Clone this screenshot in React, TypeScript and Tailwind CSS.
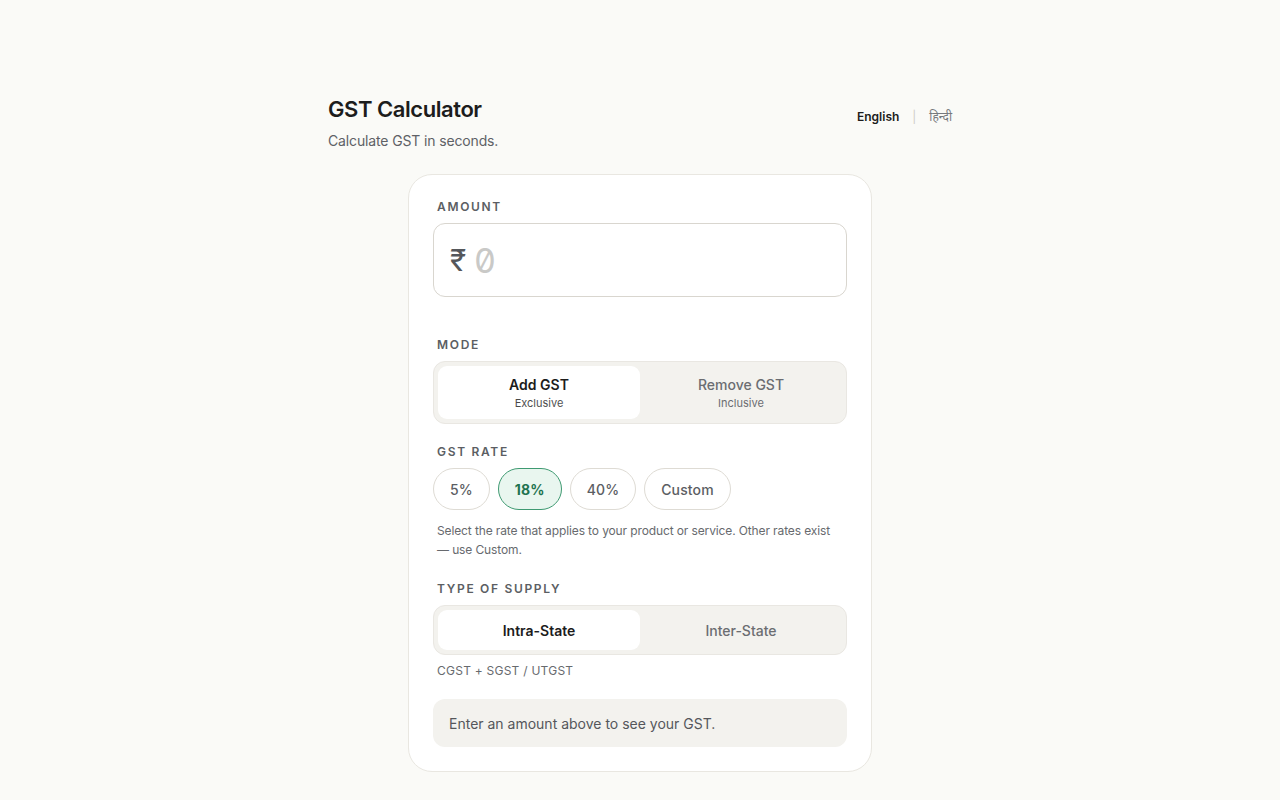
import { useState } from "react";

const font = { fontFamily: "Inter, 'Noto Sans', sans-serif" };

function Label({ children }: { children: React.ReactNode }) {
  return (
    <div className="px-1 text-[12px] font-semibold uppercase tracking-[0.14em] text-[#5b5e63] leading-4">
      {children}
    </div>
  );
}

export default function App() {
  const [mode, setMode] = useState<"add" | "remove">("add");
  const [rate, setRate] = useState("18%");
  const [supply, setSupply] = useState<"intra" | "inter">("intra");
  const rates = ["5%", "18%", "40%", "Custom"];

  return (
    <div className="min-h-screen bg-[#fafaf7] text-[#1c1c1c]" style={font}>
      <div className="mx-auto w-[624px] pt-[95px]">
        {/* Header */}
        <div className="flex items-start justify-between">
          <div>
            <h1 className="text-[22px] font-semibold tracking-[-0.02em] leading-7">GST Calculator</h1>
            <p className="mt-[8px] text-[14px] tracking-[-0.01em] text-[#5e6166] leading-5">Calculate GST in seconds.</p>
          </div>
          <div className="mt-[13px] flex items-center gap-[13px] text-[12px]">
            <span className="font-semibold text-[#1c1c1c]">English</span>
            <span className="text-[#cfcdc7]">|</span>
            <span className="text-[#77797d]" style={{ fontFamily: "'Noto Sans', Inter, sans-serif" }}>हिन्दी</span>
          </div>
        </div>

        {/* Card */}
        <div className="mx-auto mt-[23px] w-[464px] rounded-[24px] border border-[#e9e7e1] bg-white px-6 pt-6 pb-6">
          <Label>Amount</Label>
          <div className="mt-[8px] flex h-[74px] items-center gap-2 rounded-[12px] border border-[#d9d6cf] px-4">
            <span className="text-[30px] text-[#55575b]">₹</span>
            <input
              className="w-full bg-transparent text-[34px] slashed-zero text-[#333] outline-none placeholder:text-[#c9c9c7]"
              placeholder="0"
              style={font}
            />
          </div>

          <div className="mt-[40px]">
            <Label>Mode</Label>
          </div>
          <div className="mt-[8px] grid grid-cols-2 rounded-[12px] border border-[#e9e7e2] bg-[#f3f2ee] p-1">
            <button
              onClick={() => setMode("add")}
              className={`flex h-[53px] flex-col items-center justify-center rounded-[9px] ${mode === "add" ? "bg-white text-[#1c1c1c]" : "text-[#6b6d71]"}`}
            >
              <span className="text-[14px] font-semibold leading-5">Add GST</span>
              <span className="text-[11px] leading-4 opacity-80">Exclusive</span>
            </button>
            <button
              onClick={() => setMode("remove")}
              className={`flex h-[53px] flex-col items-center justify-center rounded-[9px] ${mode === "remove" ? "bg-white text-[#1c1c1c]" : "text-[#6b6d71]"}`}
            >
              <span className="text-[14px] font-medium leading-5">Remove GST</span>
              <span className="text-[11px] leading-4">Inclusive</span>
            </button>
          </div>

          <div className="mt-[20px]">
            <Label>GST Rate</Label>
          </div>
          <div className="mt-[8px] flex gap-2">
            {rates.map((r) => (
              <button
                key={r}
                onClick={() => setRate(r)}
                className={`h-[42px] rounded-full border px-4 text-[14px] tracking-[0.01em] ${
                  rate === r
                    ? "border-[#3f9a72] bg-[#e9f6ef] font-bold text-[#1f7350]"
                    : "border-[#dedbd4] font-medium text-[#5b5e63]"
                }`}
              >
                {r}
              </button>
            ))}
          </div>
          <p className="mt-[11px] px-1 text-[12px] tracking-[-0.01em] leading-[19px] text-[#676a6e]">
            Select the rate that applies to your product or service. Other rates exist — use Custom.
          </p>

          <div className="mt-[22px]">
            <Label>Type of Supply</Label>
          </div>
          <div className="mt-[8px] grid grid-cols-2 rounded-[12px] border border-[#e9e7e2] bg-[#f3f2ee] p-1">
            <button
              onClick={() => setSupply("intra")}
              className={`h-[40px] rounded-[9px] text-[14px] ${supply === "intra" ? "bg-white font-semibold text-[#1c1c1c]" : "font-medium text-[#6b6d71]"}`}
            >
              Intra-State
            </button>
            <button
              onClick={() => setSupply("inter")}
              className={`h-[40px] rounded-[9px] text-[14px] ${supply === "inter" ? "bg-white font-semibold text-[#1c1c1c]" : "font-medium text-[#6b6d71]"}`}
            >
              Inter-State
            </button>
          </div>
          <p className="mt-[8px] px-1 text-[12px] leading-4 tracking-[0.02em] text-[#676a6e]">CGST + SGST / UTGST</p>

          <div className="mt-[20px] flex h-[48px] items-center rounded-[12px] bg-[#f3f2ee] px-4 text-[14px] text-[#55575b]">
            Enter an amount above to see your GST.
          </div>
        </div>

        <div className="mt-[27px] pb-10 text-[12px] font-semibold uppercase tracking-[0.14em] text-[#5b5e63]">
          Other Calculators
        </div>
      </div>
    </div>
  );
}
